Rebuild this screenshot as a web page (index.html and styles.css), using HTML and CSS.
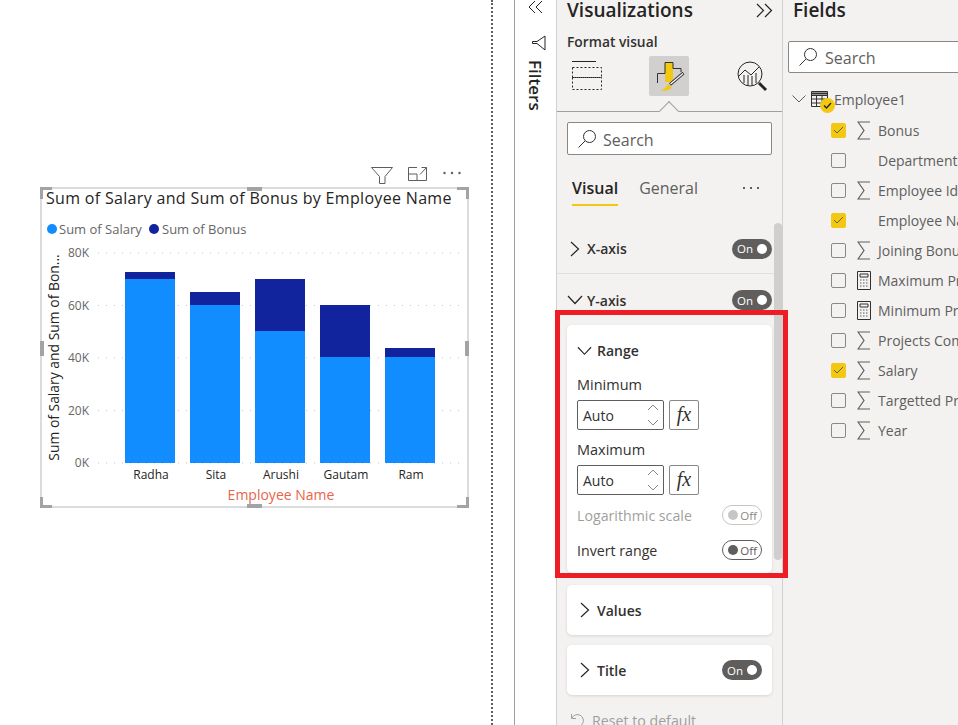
FILE: index.html
```html
<!DOCTYPE html>
<html lang="en">
<head>
<meta charset="utf-8">
<title>Power BI format pane</title>
<link rel="stylesheet" href="styles.css">
</head>
<body>
<div class="app">
  <main class="canvas">
    <svg class="chart" width="491" height="725" viewBox="0 0 491 725">
      <g class="hdr-icon">
        <path d="M371.500 167.500H392.500L385 176.500V183.500L379.500 183.500V176.500Z"/>
        <path d="M408.500 174V167.500H417M408.500 174V180.500H426.500V172M408.500 174H417V180.500M420 174.500L426.500 167.500M421.500 167.500H426.500V172"/>
      </g>
      <g class="hdr-dots"><circle cx="444.500" cy="173" r="1.200"/><circle cx="452" cy="173" r="1.200"/><circle cx="459.500" cy="173" r="1.200"/></g>
      <rect class="frame" x="41" y="188" width="427" height="319"/>
      <g class="handle">
        <path d="M40 199V187H52V190H43V199Z"/><path d="M469 199V187H457V190H466V199Z"/>
        <path d="M40 497V508H52V505H43V497Z"/><path d="M469 497V508H457V505H466V497Z"/>
        <rect x="247" y="187" width="15" height="4"/><rect x="247" y="504" width="15" height="4"/>
        <rect x="40" y="341" width="4" height="15"/><rect x="465" y="341" width="4" height="15"/>
      </g>
      <text class="c-title" x="46" y="204">Sum of Salary and Sum of Bonus by Employee Name</text>
      <circle class="s1" cx="52" cy="229" r="5"/>
      <text class="c-legend" x="59" y="234">Sum of Salary</text>
      <circle class="s2" cx="154" cy="229" r="5"/>
      <text class="c-legend" x="162" y="234">Sum of Bonus</text>
      <g class="grid">
        <path d="M98 253H461M98 305.500H461M98 358H461M98 410.500H461M98 463H461"/>
      </g>
      <g class="c-yl">
        <text x="89" y="257">80K</text><text x="89" y="310">60K</text><text x="89" y="362">40K</text><text x="89" y="415">20K</text><text x="89" y="467">0K</text>
      </g>
      <text class="c-ytitle" transform="translate(59 357.500) rotate(-90)" text-anchor="middle">Sum of Salary and Sum of Bon...</text>
      <rect class="s2" x="125" y="272" width="50" height="7"/><rect class="s1" x="125" y="279" width="50" height="184"/>
      <rect class="s2" x="190" y="292" width="50" height="13"/><rect class="s1" x="190" y="305" width="50" height="158"/>
      <rect class="s2" x="255" y="279" width="50" height="52"/><rect class="s1" x="255" y="331" width="50" height="132"/>
      <rect class="s2" x="320" y="305" width="50" height="52"/><rect class="s1" x="320" y="357" width="50" height="106"/>
      <rect class="s2" x="385" y="348" width="50" height="9"/><rect class="s1" x="385" y="357" width="50" height="106"/>
      <g class="c-xl">
        <text x="151" y="479">Radha</text><text x="216" y="479">Sita</text><text x="281" y="479">Arushi</text><text x="346" y="479">Gautam</text><text x="411" y="479">Ram</text>
      </g>
      <text class="c-xtitle" x="281" y="500">Employee Name</text>
    </svg>
  </main>
  <div class="gutter"></div>

  <aside class="filters">
    <svg class="i-collapse" width="15" height="14" viewBox="0 0 15 14"><path d="M7 1L1 7L7 13M14 1L8 7L14 13"/></svg>
    <svg class="i-filter" width="15" height="16" viewBox="0 0 15 16"><path d="M14 1V15L6 8.500H1.500V6.500H6Z"/></svg>
    <span class="filters-label">Filters</span>
  </aside>

  <section class="viz">
    <header class="pane-head">
      <h2>Visualizations</h2>
      <svg class="i-expand" width="17" height="15" viewBox="0 0 17 15"><path d="M1 1L7.500 7.500L1 14M9 1L15.500 7.500L9 14"/></svg>
    </header>
    <div class="format-label">Format visual</div>
    <div class="viz-tabs">
      <svg class="i-build" width="30" height="30" viewBox="0 0 30 30">
        <path class="solid" d="M0 .5H24"/>
        <rect class="dash" x=".5" y="6.500" width="29" height="10"/>
        <rect class="dash" x=".5" y="16.500" width="29" height="12"/>
      </svg>
      <div class="viz-tab-on">
        <svg width="40" height="40" viewBox="0 0 40 40">
          <rect class="f-y" x="16" y="6" width="8" height="20"/>
          <path class="f-l" d="M8.500 27V17.500H16V6.500H24V12.500H32V16"/>
          <path class="f-b" d="M34.500 17L21 28.500"/>
          <path class="f-bw" d="M34 17.500L21.500 28"/>
          <path class="f-yb" d="M11 34C16 33.500 17.500 31 18.500 28L23 31.500C21 34.500 16 35.500 11 34Z"/>
        </svg>
      </div>
      <svg class="i-ana" width="32" height="32" viewBox="0 0 32 32">
        <circle cx="13" cy="13" r="12"/>
        <path d="M2 15L8 9L14 14L22 6M7 14V22M11 14V24M15 15V24M19 12V22"/>
        <path class="thick" d="M22 22L29 29"/>
      </svg>
    </div>
    <div class="notch-rule"><span class="notch"></span></div>
    <div class="search">
      <svg class="i-search" width="20" height="20" viewBox="0 0 20 20"><circle cx="12.500" cy="7.500" r="6"/><path d="M8 12L1.500 18.500"/></svg>
      <span>Search</span>
    </div>
    <nav class="tabs">
      <span class="tab tab-on">Visual</span>
      <span class="tab">General</span>
      <span class="more"><i></i><i></i><i></i></span>
    </nav>

    <div class="scroll-area">
      <div class="thumb"></div>
      <div class="section">
        <svg class="chev-r" width="10" height="16" viewBox="0 0 10 16"><path d="M1 1L8.500 8L1 15"/></svg>
        <span class="sec-name">X-axis</span>
        <span class="toggle on"><span>On</span><b></b></span>
      </div>
      <div class="section section-open">
        <svg class="chev-d" width="16" height="10" viewBox="0 0 16 10"><path d="M1 1L8 8.500L15 1"/></svg>
        <span class="sec-name">Y-axis</span>
        <span class="toggle on"><span>On</span><b></b></span>
      </div>
      <div class="card card-range">
        <div class="card-head">
          <svg class="chev-d" width="15" height="10" viewBox="0 0 16 10"><path d="M1 1L8 8.500L15 1"/></svg>
          <span class="sec-name">Range</span>
        </div>
        <label class="f-label">Minimum</label>
        <div class="f-row">
          <div class="spin"><span>Auto</span>
            <svg width="14" height="24" viewBox="0 0 14 24"><path d="M2 7L7 2L12 7M2 17L7 22L12 17"/></svg>
          </div>
          <div class="fx">fx</div>
        </div>
        <label class="f-label f-label2">Maximum</label>
        <div class="f-row">
          <div class="spin"><span>Auto</span>
            <svg width="14" height="24" viewBox="0 0 14 24"><path d="M2 7L7 2L12 7M2 17L7 22L12 17"/></svg>
          </div>
          <div class="fx">fx</div>
        </div>
        <div class="opt opt-first disabled"><span>Logarithmic scale</span><span class="toggle off"><b></b><span>Off</span></span></div>
        <div class="opt"><span>Invert range</span><span class="toggle off"><b></b><span>Off</span></span></div>
      </div>
      <div class="card card-row">
        <svg class="chev-r" width="10" height="16" viewBox="0 0 10 16"><path d="M1 1L8.500 8L1 15"/></svg>
        <span class="sec-name">Values</span>
      </div>
      <div class="card card-row">
        <svg class="chev-r" width="10" height="16" viewBox="0 0 10 16"><path d="M1 1L8.500 8L1 15"/></svg>
        <span class="sec-name">Title</span>
        <span class="toggle on"><span>On</span><b></b></span>
      </div>
      <div class="reset">
        <svg width="15" height="15" viewBox="0 0 15 15"><path d="M1.500 1V5.500H6M2 5A6 6 0 1 1 4 12.500"/></svg>
        <span>Reset to default</span>
      </div>
    </div>
    <div class="highlight"></div>
  </section>

  <section class="fields">
    <header class="pane-head"><h2>Fields</h2></header>
    <div class="search search-fields">
      <svg class="i-search" width="20" height="20" viewBox="0 0 20 20"><circle cx="12.500" cy="7.500" r="6"/><path d="M8 12L1.500 18.500"/></svg>
      <span>Search</span>
    </div>
    <div class="table-row">
      <svg class="chev-t" width="14" height="8" viewBox="0 0 14 8"><path d="M.5 .5L7 7L13.500 .5"/></svg>
      <span class="t-icon">
        <svg width="17" height="16" viewBox="0 0 17 16"><path d="M.5 .5H16.500V15.500H.5ZM.5 4.500H16.500M.5 8H16.500M.5 12H16.500M5.500 4.500V15.500M11 4.500V15.500"/><path class="t-top" d="M.5 2.500H16.500"/></svg>
        <span class="t-badge"><svg width="9" height="7" viewBox="0 0 9 7"><path d="M1 3.500L3.500 6L8 1"/></svg></span>
      </span>
      <span class="t-name">Employee1</span>
    </div>
    <ul class="field-list">
      <li><span class="cb on"><svg width="11" height="8" viewBox="0 0 11 8"><path d="M1 4L4 7L10 1"/></svg></span><svg class="sig" width="14" height="19" viewBox="0 0 14 19"><path d="M13 1H1L7 9.500L1 18H13"/></svg><span>Bonus</span></li>
      <li><span class="cb"></span><span class="sig-none"></span><span>Department</span></li>
      <li><span class="cb"></span><svg class="sig" width="14" height="19" viewBox="0 0 14 19"><path d="M13 1H1L7 9.500L1 18H13"/></svg><span>Employee Id</span></li>
      <li><span class="cb on"><svg width="11" height="8" viewBox="0 0 11 8"><path d="M1 4L4 7L10 1"/></svg></span><span class="sig-none"></span><span>Employee Name</span></li>
      <li><span class="cb"></span><svg class="sig" width="14" height="19" viewBox="0 0 14 19"><path d="M13 1H1L7 9.500L1 18H13"/></svg><span>Joining Bonus</span></li>
      <li><span class="cb"></span><svg class="sig calc" width="14" height="19" viewBox="0 0 14 19"><path d="M.5 .5H13.500V18.500H.5ZM3 3H11V6H3Z"/><path class="calc-d" d="M3 9H11M3 12H11M3 15H11"/></svg><span>Maximum Projects</span></li>
      <li><span class="cb"></span><svg class="sig calc" width="14" height="19" viewBox="0 0 14 19"><path d="M.5 .5H13.500V18.500H.5ZM3 3H11V6H3Z"/><path class="calc-d" d="M3 9H11M3 12H11M3 15H11"/></svg><span>Minimum Projects</span></li>
      <li><span class="cb"></span><svg class="sig" width="14" height="19" viewBox="0 0 14 19"><path d="M13 1H1L7 9.500L1 18H13"/></svg><span>Projects Completed</span></li>
      <li><span class="cb on"><svg width="11" height="8" viewBox="0 0 11 8"><path d="M1 4L4 7L10 1"/></svg></span><svg class="sig" width="14" height="19" viewBox="0 0 14 19"><path d="M13 1H1L7 9.500L1 18H13"/></svg><span>Salary</span></li>
      <li><span class="cb"></span><svg class="sig" width="14" height="19" viewBox="0 0 14 19"><path d="M13 1H1L7 9.500L1 18H13"/></svg><span>Targetted Projects</span></li>
      <li><span class="cb"></span><svg class="sig" width="14" height="19" viewBox="0 0 14 19"><path d="M13 1H1L7 9.500L1 18H13"/></svg><span>Year</span></li>
    </ul>
  </section>
</div>
</body>
</html>
```
FILE: styles.css
```css
* { box-sizing: border-box; }
html, body { margin: 0; height: 100%; overflow: hidden; background: #fff; }
body { font-family: "Open Sans", "Noto Sans", sans-serif; color: #252423; }
svg { display: block; fill: none; flex: none; }
h2 { margin: -1px 0 0; font-size: 19px; font-weight: 600; line-height: 20px; color: #252423; }

.app { display: flex; width: 958px; height: 725px; overflow: hidden; }

/* report canvas */
.canvas { width: 493px; height: 725px; flex: none; border-right: 2px dotted #605e5c; }
.gutter { width: 22px; flex: none; border-right: 1px solid #a19f9d; }
.chart text { font-family: "Open Sans", sans-serif; }
.hdr-icon path { stroke: #605e5c; stroke-width: 1; }
.hdr-dots circle { fill: #605e5c; }
.frame { fill: #fff; stroke: #d0d0d0; stroke-width: 1.500; }
.handle { fill: #a3a3a3; }
.c-title { font-size: 16px; fill: #252423; letter-spacing: .32px; }
.c-legend { font-size: 13px; fill: #666; }
.c-yl text { font-size: 12px; fill: #666; text-anchor: end; }
.c-xl text { font-size: 12px; fill: #252423; text-anchor: middle; }
.c-ytitle { font-size: 13.900px; fill: #252423; }
.c-xtitle { font-size: 14px; fill: #e8644a; text-anchor: middle; }
.grid path { stroke: #c8c6c4; stroke-width: 1; stroke-dasharray: 1 7; }
.s1 { fill: #118dff; }
.s2 { fill: #12239e; }

/* filters strip */
.filters { width: 42px; flex: none; background: #fff; border-right: 1px solid #d2d0ce; position: relative; }
.i-collapse { margin: 0 0 0 13px; }
.i-collapse path { stroke: #252423; stroke-width: 1; }
.i-filter { margin: 21px 0 0 16px; }
.i-filter path { stroke: #252423; stroke-width: 1; }
.filters-label { display: block; margin: 9px 0 0 10px; writing-mode: vertical-rl; font-size: 17px; font-weight: 600; line-height: 20px; color: #252423; }

/* visualizations pane */
.viz { width: 226px; flex: none; background: #f3f2f1; border-right: 1px solid #d2d0ce; position: relative; }
.pane-head { display: flex; justify-content: space-between; align-items: center; height: 20px; padding: 0 9px 0 10px; }
.i-expand path { stroke: #252423; stroke-width: 1.200; }
.i-expand { margin-top: 1px; }
.format-label { margin: 13px 0 0 10px; font-size: 13.800px; font-weight: 600; line-height: 18px; color: #323130; }
.viz-tabs { display: flex; align-items: flex-start; margin-top: 5px; height: 40px; padding-left: 15px; }
.i-build { margin-top: 5px; }
.i-build .solid { stroke: #252423; }
.i-build .dash { stroke: #252423; stroke-dasharray: 2 2; }
.viz-tab-on { width: 40px; height: 40px; margin-left: 47px; background: #d2d0ce; border-radius: 2px; }
.f-y { fill: #f2c811; }
.f-l { stroke: #323130; stroke-width: 1; }
.f-b { stroke: #323130; stroke-width: 3; }
.f-bw { stroke: #fff; stroke-width: 1.200; }
.f-yb { fill: #f2c811; }
.i-ana { margin: 5px 0 0 48px; }
.i-ana circle, .i-ana path { stroke: #252423; stroke-width: 1; }
.i-ana .thick { stroke-width: 3; }
.notch-rule { height: 1px; margin-top: 15px; background: #a19f9d; position: relative; }
.notch { position: absolute; left: 105px; top: -7px; width: 14px; height: 14px; transform: rotate(45deg); background: #f3f2f1; border-left: 1px solid #a19f9d; border-top: 1px solid #a19f9d; }

.search { display: flex; align-items: center; gap: 6px; height: 33px; margin: 10px 10px 0; padding-left: 9px; background: #fff; border: 1px solid #8a8886; border-radius: 2px; font-size: 16px; color: #605e5c; }
.search span { position: relative; top: 1px; }
.i-search circle, .i-search path { stroke: #323130; stroke-width: 1; }

.tabs { display: flex; align-items: flex-start; margin: 21px 0 0 15px; height: 30px; font-size: 16px; line-height: 24px; color: #605e5c; }
.tab { display: block; height: 30px; margin-right: 21px; }
.tab-on { color: #252423; font-weight: 600; border-bottom: 2px solid #f2c811; }
.more { display: flex; gap: 5px; margin: 11px 0 0 24px; }
.more i { width: 2px; height: 2px; background: #323130; border-radius: 50%; }

.scroll-area { position: relative; margin-top: 18px; }
.thumb { position: absolute; right: 0; top: -1px; width: 8px; height: 337px; background: #d0cfce; border-radius: 4px; }
.section { display: flex; align-items: center; height: 50px; padding: 0 3px 0 13px; gap: 7px; border-bottom: 1px solid #e1dfdd; margin-right: 7px; }
.section-open { border-bottom: 0; height: 51px; padding-top: 1px; padding-left: 10px; gap: 4px; }
.sec-name { font-size: 14px; font-weight: 600; color: #323130; }
.chev-r path, .chev-d path { stroke: #252423; stroke-width: 1.200; }

.toggle { display: flex; align-items: center; justify-content: space-between; margin-left: auto; width: 40px; height: 20px; padding: 0 5px; border-radius: 10px; font-size: 11.500px; }
.toggle b { width: 10px; height: 10px; border-radius: 50%; flex: none; }
.toggle.on { background: #605e5c; color: #fff; }
.toggle.on b { background: #fff; }
.toggle.off { background: #fff; border: 1px solid #605e5c; color: #605e5c; padding: 0 4px 0 5px; }
.toggle.off b { background: #605e5c; }

.card { margin: 0 10px; background: #fff; border-radius: 5px; box-shadow: 0 1px 3px rgba(0,0,0,.12); }
.card-range { height: 248px; padding: 0 10px; margin-bottom: 12px; }
.card-head { display: flex; align-items: center; gap: 5px; height: 51px; }
.f-label { display: block; margin-top: -1px; height: 25px; font-size: 14.500px; line-height: 20px; color: #323130; }
.f-label2 { margin-top: 10px; }
.f-row { display: flex; gap: 5px; }
.spin { display: flex; align-items: center; justify-content: space-between; width: 87px; height: 30px; padding: 0 3px 0 5px; border: 1px solid #605e5c; border-radius: 2px; font-size: 14px; color: #323130; }
.spin path { stroke: #8a8886; stroke-width: 1; }
.fx { width: 30px; height: 30px; border: 1px solid #8a8886; border-radius: 2px; font-family: "Liberation Serif", serif; font-style: italic; font-size: 20px; line-height: 26px; text-align: center; color: #323130; }
.opt { display: flex; align-items: center; height: 20px; margin-top: 15px; font-size: 14.200px; color: #323130; }
.opt .toggle { margin-left: auto; }
.opt-first { margin-top: 10px; }
.disabled { color: #a19f9d; }
.disabled .toggle.off { border-color: #c8c6c4; color: #8a8886; }
.disabled .toggle.off b { background: #c8c6c4; }
.card-row { display: flex; align-items: center; gap: 7px; height: 50px; padding: 0 10px 0 13px; margin-bottom: 10px; }
.reset { display: flex; align-items: center; gap: 7px; padding-left: 13px; margin-top: 15px; font-size: 14.200px; color: #a19f9d; height: 20px; }
.reset path { stroke: #a19f9d; stroke-width: 1; }

.highlight { position: absolute; left: -2px; top: 310px; width: 233px; height: 268px; border: 5px solid #ee1c25; pointer-events: none; }

/* fields pane */
.fields { flex: 1; min-width: 0; background: #f3f2f1; overflow: hidden; }
.search-fields { width: 190px; height: 32px; margin: 21px 0 0 5px; padding-left: 9px; gap: 7px; }
.table-row { display: flex; align-items: center; height: 20px; margin-top: 16px; padding-left: 9px; }
.chev-t path { stroke: #605e5c; stroke-width: 1; }
.t-icon { position: relative; margin-left: 5px; width: 17px; height: 16px; }
.t-icon path { stroke: #323130; stroke-width: 1; }
.t-icon .t-top { stroke-width: 2; }
.t-badge { position: absolute; left: 9px; top: 7px; width: 15px; height: 15px; border-radius: 50%; background: #f2c811; display: flex; align-items: center; justify-content: center; }
.t-badge path { stroke: #252423; stroke-width: 1.300; }
.t-name { margin-left: 6px; font-size: 14px; color: #605e5c; }
.field-list { list-style: none; margin: 6px 0 0; padding: 0 0 0 48px; }
.field-list li { display: flex; align-items: center; height: 30px; font-size: 14px; color: #605e5c; white-space: nowrap; }
.cb { display: flex; align-items: center; justify-content: center; width: 15px; height: 15px; border: 1px solid #8a8886; border-radius: 2px; background: #f3f2f1; flex: none; }
.cb.on { background: #f2c811; border-color: #f2c811; }
.cb path { stroke: #605e5c; stroke-width: 1; }
.sig { margin: 0 7px 0 11px; }
.sig path { stroke: #605e5c; stroke-width: 1.200; }
.calc path { stroke: #323130; stroke-width: 1; }
.calc .calc-d { stroke-dasharray: 1.500 1.500; stroke: #605e5c; }
.sig-none { width: 32px; flex: none; }
```
